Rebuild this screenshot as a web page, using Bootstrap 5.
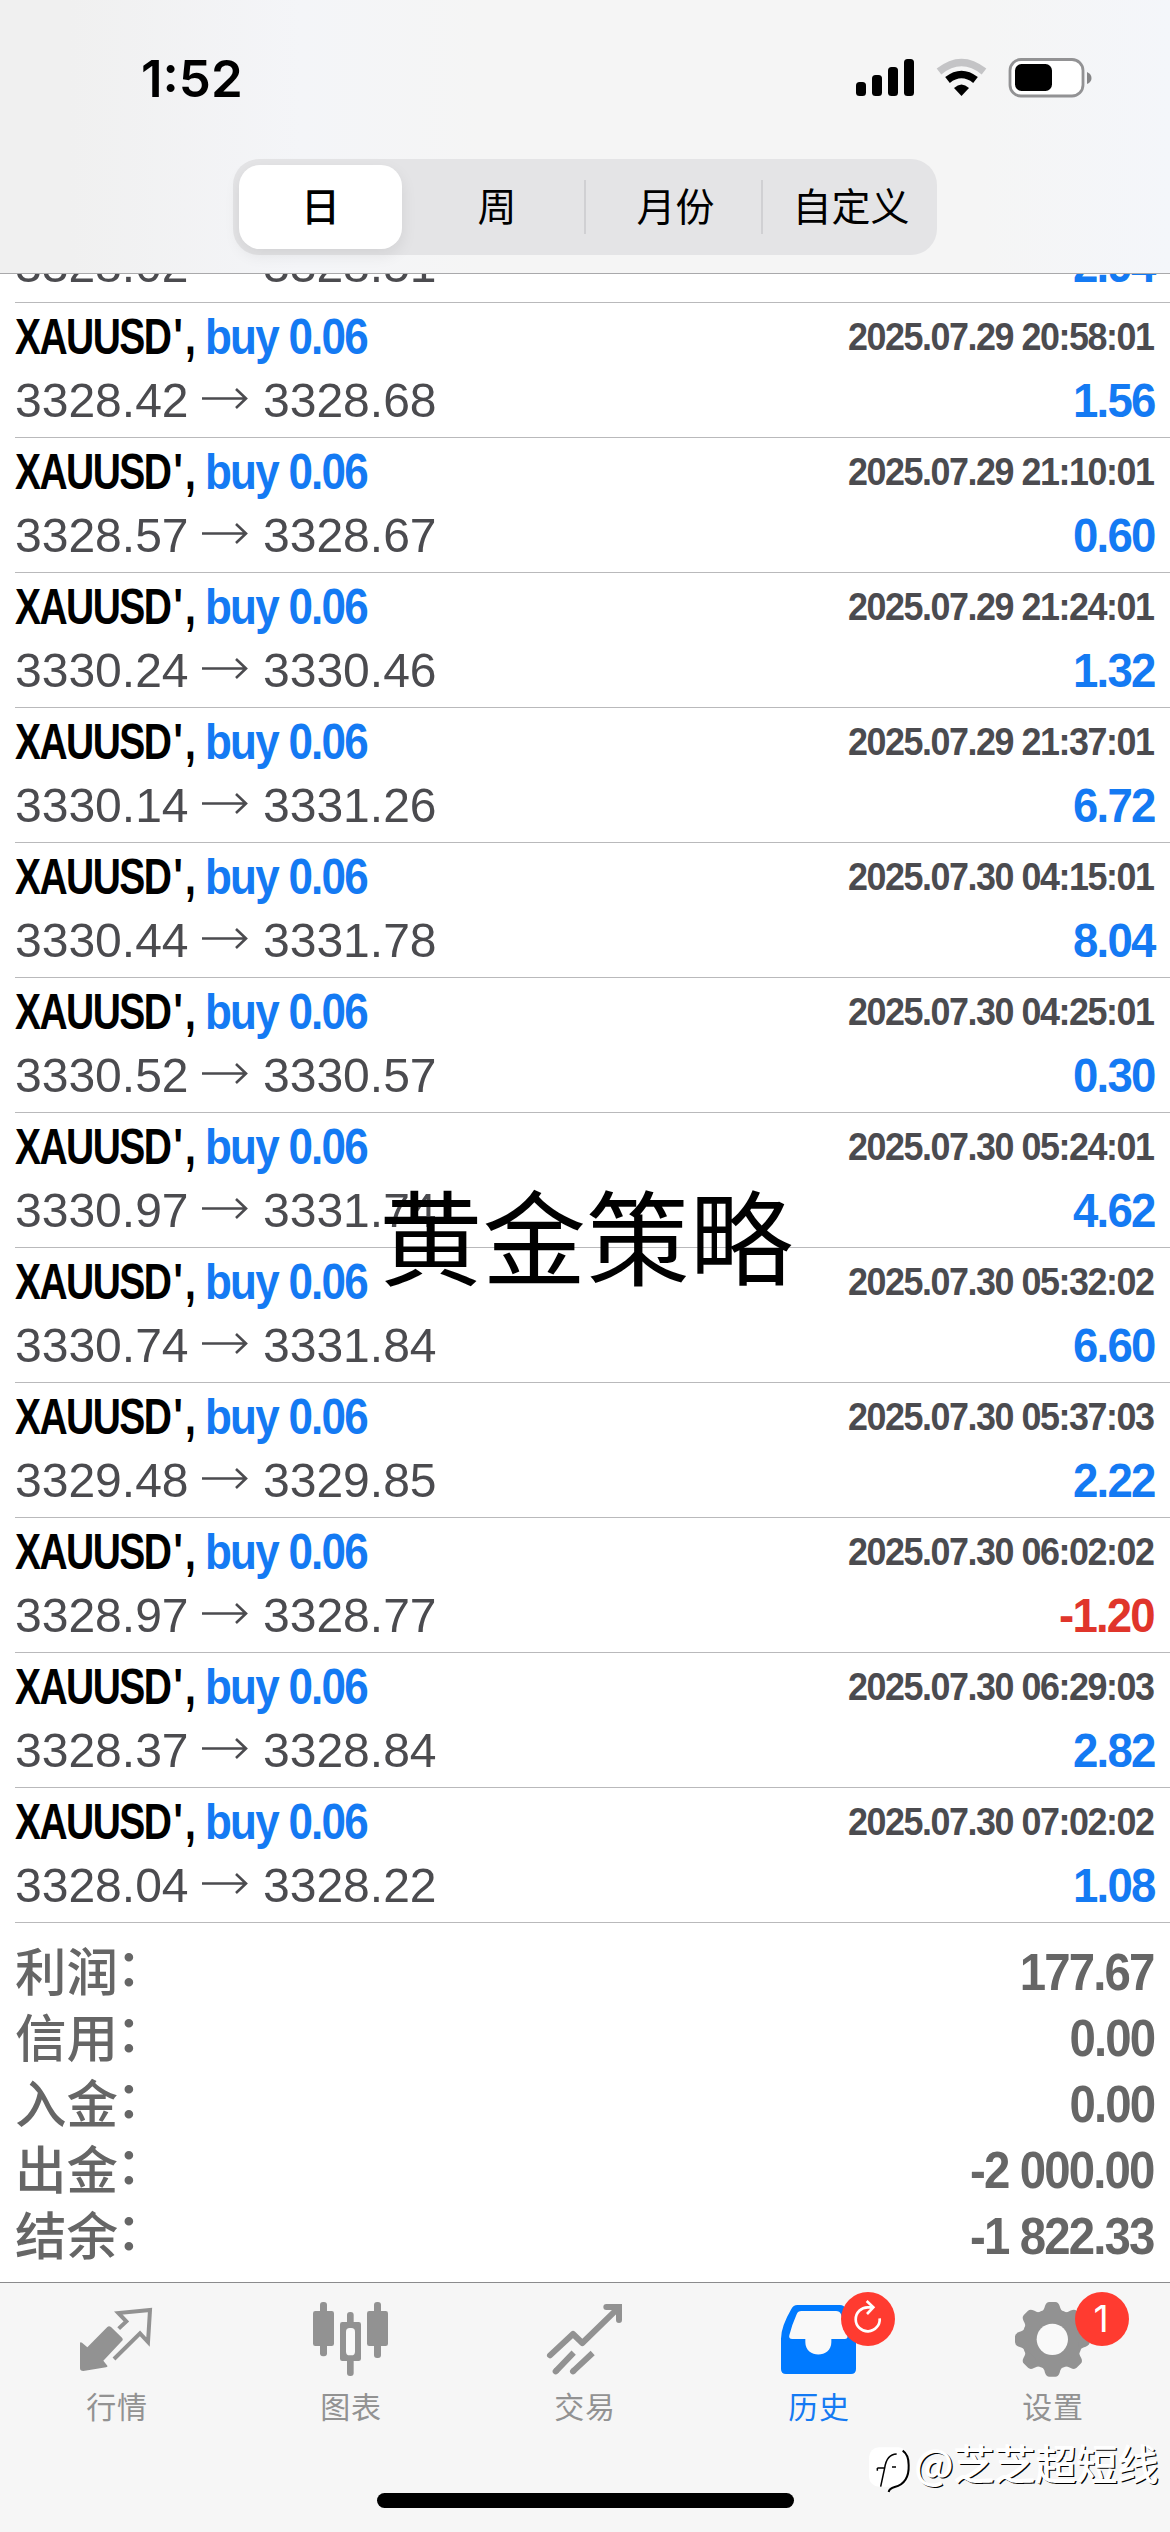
<!DOCTYPE html>
<html lang="zh-CN">
<head>
<meta charset="utf-8">
<meta name="viewport" content="width=device-width, initial-scale=1">
<title>历史</title>
<link href="https://cdn.jsdelivr.net/npm/bootstrap@5.3.0/dist/css/bootstrap.min.css" rel="stylesheet">
<style>
  body { width: 1170px; height: 2532px; margin: 0; background: #fff; font-family: "Liberation Sans", "Noto Sans CJK SC", sans-serif; overflow: hidden; }
  .top-area { height: 274px; border-bottom: 1px solid #a9a9ab; background: linear-gradient(90deg, #f0f0f0 0, #f0f0f0 70px, #f4f5f8 300px, #f5f5f5 480px, #f5f5f5 980px, #f4f6fa 1170px); }
  .status-line { height: 159px; }
  .clock { font: 600 51px/60px Inter, sans-serif; color: #000; padding: 49px 0 0 141px; }
  .segments { width: 704px; height: 96px; margin-left: 233px; padding: 6px; border-radius: 26px; background: #e4e4e6; font: 400 39px/78px "Noto Sans CJK SC", sans-serif; color: #000; }
  .segments > div { text-align: center; height: 84px; }
  .seg-on { width: 163px; background: #fff; border-radius: 21px; font-weight: 500; box-shadow: 0 6px 16px rgba(0,0,0,.08); }
  .seg-sep { width: 2px; height: 54px !important; background: #d0d0d3; margin-top: 15px; }
  .deals { height: 1649px; overflow: hidden; }
  .deal { flex: 0 0 135px; height: 135px; margin-left: 15px; padding-right: 15px; border-bottom: 1px solid #b9b9bb; white-space: nowrap; }
  .line-a { height: 67px; line-height: 67px; font-weight: 700; }
  .line-b { height: 61px; line-height: 61px; }
  .fit-l, .fit-r { display: block; transform-origin: 0 50%; }
  .fit-r { transform-origin: 100% 50%; }
  .sym { width: 190px; font-size: 50px; line-height: 69px; color: #000; letter-spacing: -2px; transform: scaleX(.78); }
  .sym-tail { margin-left: 4px; letter-spacing: 3px; }
  .side { font-size: 50px; line-height: 69px; color: #147af3; letter-spacing: -2px; transform: scaleX(.88); }
  .stamp { font-size: 39.5px; color: #4b4b4f; letter-spacing: -1.6px; transform: scaleX(.908); margin-right: 2px; }
  .price { width: 187px; font-size: 49px; color: #4b4b4f; transform: scaleX(.98); }
  .arrow { width: 61px; height: 59px; }
  .gain { font-size: 49px; font-weight: 700; color: #147af3; letter-spacing: -2px; transform: scaleX(.93); margin-right: 1px; }
  .loss { color: #e0352b; }
  .totals { height: 359px; padding: 16px 16px 0 15px; color: #666; }
  .total-row { height: 66px; line-height: 66px; white-space: nowrap; }
  .total-name { font: 500 51.5px/60px "Noto Sans CJK SC", sans-serif; }
  .total-colon { display: inline-block; transform: translate(-2px, -5px); }
  .total-sum { font-size: 51.5px; font-weight: 700; letter-spacing: -2px; transform: scaleX(.92); }
  .tabs-area { height: 250px; border-top: 1px solid #8b8b8d; background: #f6f6f6; }
  .tab-item { width: 234px; height: 148px; color: #929292; font: 400 30px/44px "Noto Sans CJK SC", sans-serif; letter-spacing: .8px; text-align: center; }
  .tab-item svg { display: block; width: 234px; height: 100px; }
  .tab-on { color: #147af3; }
  .home-bar { width: 417px; height: 15px; border-radius: 8px; background: #000; margin: 62px auto 0; }
  .overlay-title { position: absolute; left: 379px; top: 1158px; font: 400 103.5px/150px "Noto Sans CJK SC", sans-serif; color: #000; white-space: nowrap; }
  .credit { position: absolute; left: 866px; top: 2436px; height: 60px; color: #fff; font: 400 41px/52px "Noto Sans CJK SC", sans-serif; white-space: nowrap; text-shadow: -1px -1px 0 #fff, 1.2px 1.2px 0 #000; }
</style>
<script src="https://cdn.jsdelivr.net/npm/bootstrap@5.3.0/dist/js/bootstrap.bundle.min.js"></script>
</head>
<body class="d-flex flex-column position-relative">

<header class="top-area flex-shrink-0">
  <div class="status-line d-flex justify-content-between">
    <div class="clock">1:52</div>
    <svg width="320" height="120" viewBox="850 0 320 120">
      <g fill="#000">
        <rect x="856" y="82" width="10" height="14" rx="3.5"/><rect x="872" y="75" width="10" height="21" rx="3.5"/>
        <rect x="888" y="67" width="10" height="29" rx="3.5"/><rect x="904" y="59" width="10" height="37" rx="3.5"/>
        <path d="M961.500 96 L954 88 Q961.500 81 969 88Z"/>
      </g>
      <path d="M947.500 80 Q961.500 69 975.500 80" fill="none" stroke="#000" stroke-width="7.500"/>
      <path d="M939 71.500 Q961.500 53.500 984 71.500" fill="none" stroke="#c4c4c6" stroke-width="7.500"/>
      <rect x="1010" y="59.500" width="73" height="36.500" rx="11" fill="#fff" stroke="#929294" stroke-width="2.800"/>
      <rect x="1015" y="64" width="37" height="27" rx="6.500" fill="#000"/>
      <path d="M1087 72 Q1091.500 74 1091.500 78 Q1091.500 82 1087 84Z" fill="#858587"/>
    </svg>
  </div>
  <div class="segments d-flex">
    <div class="seg-on">日</div>
    <div style="width:182px;padding-left:8px">周</div>
    <div class="seg-sep"></div>
    <div style="width:175px;padding-left:4px">月份</div>
    <div class="seg-sep"></div>
    <div style="width:168px;padding-left:8px">自定义</div>
  </div>
</header>

<main class="flex-shrink-0">
  <div class="deals d-flex flex-column justify-content-end" id="deals"></div>
  <div class="totals" id="totals"></div>
</main>

<nav class="tabs-area flex-shrink-0">
  <div class="d-flex">
    <div class="tab-item">
      <svg viewBox="0 69 702 300">
        <path d="M322 201 Q327 196 333 201 L366 233 Q371 239 365 244 L310 302 L322 317 Q324 321 318 322 L250 333 Q240 333 240 325 L240 248 Q242 245 246 248 L262 262Z" fill="#929292"/>
        <path d="M356 206 L379 184 L355 159 L450 150 L444 246 L420 220 L342 297" fill="none" stroke="#929292" stroke-width="12"/>
      </svg>行情
    </div>
    <div class="tab-item">
      <svg viewBox="702 69 702 300" fill="#929292">
        <rect x="960" y="126" width="21" height="163" rx="9"/><rect x="939" y="153" width="63" height="105" rx="7"/>
        <rect x="1122" y="126" width="21" height="168" rx="9"/><rect x="1101" y="153" width="63" height="105" rx="7"/>
        <rect x="1041" y="156" width="20" height="192" rx="9"/><rect x="1020" y="186" width="63" height="117" rx="7"/>
        <rect x="1038" y="204" width="27" height="82" rx="11" fill="#f9f9f9"/>
      </svg>图表
    </div>
    <div class="tab-item">
      <svg viewBox="204 69 702 300" fill="none" stroke="#929292" stroke-width="18">
        <path d="M450 286 L519 222 L547 249 L656 143" stroke-linecap="round" stroke-linejoin="round"/>
        <path d="M619 141 H657 V180" stroke-linecap="round"/>
        <path d="M467 334 L521 278 M519 334 L578 279" />
        <path d="M467 334 l1 -1 M519 334 l1 -1" stroke-linecap="round"/>
      </svg>交易
    </div>
    <div class="tab-item tab-on">
      <svg viewBox="-114 69 702 300">
        <path d="M172 135 H300 Q312 135 318 147 Q348 200 348 236 V327 Q348 342 333 342 H138 Q123 342 123 327 V236 Q123 200 154 147 Q160 135 172 135Z" fill="#007aff"/>
        <path d="M184 153 H288 Q299 153 303 163 L322 226 Q325 237 314 237 H274 V247 C274 296 196 296 196 247 V237 H157 Q145 237 148 226 Q156 194 170 163 Q174 153 184 153Z" fill="#f9f9f9"/>
        <circle cx="384" cy="177" r="81" fill="#ff3b30"/>
        <path d="M419 175 A36 36 0 1 1 384 142 H399 M380 123 L400 142 L381 162" fill="none" stroke="#fff" stroke-width="8"/>
      </svg>历史
    </div>
    <div class="tab-item">
      <svg viewBox="588 69 702 300">
        <g fill="#929292" id="gear"></g>
        <circle cx="937" cy="238" r="47" fill="#f9f9f9"/>
        <circle cx="1086" cy="177" r="81" fill="#ff3b30"/>
        <text x="1084" y="215" text-anchor="middle" fill="#fff" font-family="Inter, sans-serif" font-size="112">1</text>
      </svg>设置
    </div>
  </div>
  <div class="home-bar"></div>
</nav>

<div class="overlay-title">黄金策略</div>
<div class="credit d-flex">
  <svg width="49" height="60" viewBox="378 528 147 180">
    <rect x="387" y="562" width="118" height="118" rx="30" fill="#fff"/>
    <g fill="none" stroke="#000" stroke-width="4.500">
      <path d="M422 680 L434 624 H412 M412 632 V624 M434 624 Q440 583 470 582 M456 621 H468"/>
      <path d="M488 572 Q506 584 506 615 Q508 670 464 681 Q448 685 446 696" stroke-width="6"/>
    </g>
  </svg><span>@芝芝超短线</span>
</div>

<script>
  const deals = [
    ['3328.02', '3328.51', '2025.07.29 20:45:01', '2.94'],
    ['3328.42', '3328.68', '2025.07.29 20:58:01', '1.56'],
    ['3328.57', '3328.67', '2025.07.29 21:10:01', '0.60'],
    ['3330.24', '3330.46', '2025.07.29 21:24:01', '1.32'],
    ['3330.14', '3331.26', '2025.07.29 21:37:01', '6.72'],
    ['3330.44', '3331.78', '2025.07.30 04:15:01', '8.04'],
    ['3330.52', '3330.57', '2025.07.30 04:25:01', '0.30'],
    ['3330.97', '3331.74', '2025.07.30 05:24:01', '4.62'],
    ['3330.74', '3331.84', '2025.07.30 05:32:02', '6.60'],
    ['3329.48', '3329.85', '2025.07.30 05:37:03', '2.22'],
    ['3328.97', '3328.77', '2025.07.30 06:02:02', '-1.20'],
    ['3328.37', '3328.84', '2025.07.30 06:29:03', '2.82'],
    ['3328.04', '3328.22', '2025.07.30 07:02:02', '1.08']
  ];
  document.getElementById('deals').innerHTML = deals.map(([from, to, at, sum]) => `
    <div class="deal">
      <div class="line-a d-flex">
        <span class="fit-l sym">XAUUSD<span class="sym-tail">',</span></span><span class="fit-l side">buy 0.06</span>
        <span class="fit-r stamp ms-auto">${at}</span>
      </div>
      <div class="line-b d-flex">
        <span class="fit-l price">${from}</span>
        <svg class="arrow" viewBox="0 0 61 59" fill="none" stroke="#4b4b4f" stroke-width="2.600"><path d="M0 28.500 H44 M34 19 L44 28.500 L34 38"/></svg>
        <span class="fit-l price">${to}</span>
        <span class="fit-r gain ms-auto${sum[0] === '-' ? ' loss' : ''}">${sum}</span>
      </div>
    </div>`).join('');

  const totals = [['利润', '177.67'], ['信用', '0.00'], ['入金', '0.00'], ['出金', '-2 000.00'], ['结余', '-1 822.33']];
  document.getElementById('totals').innerHTML = totals.map(([name, sum]) => `
    <div class="total-row d-flex justify-content-between">
      <span class="total-name">${name}<span class="total-colon">：</span></span><span class="fit-r total-sum">${sum}</span>
    </div>`).join('');

  // Gear: a disc with eight rounded teeth
  let gear = '<circle cx="937" cy="238" r="91"/>';
  for (let i = 0; i < 8; i++) {
    gear += `<path transform="rotate(${i * 45} 937 238)" d="M900 160 Q912 152 915 138 Q919 126 928 126 H946 Q955 126 959 138 Q962 152 974 160Z"/>`;
  }
  document.getElementById('gear').innerHTML = gear;
</script>
</body>
</html>
